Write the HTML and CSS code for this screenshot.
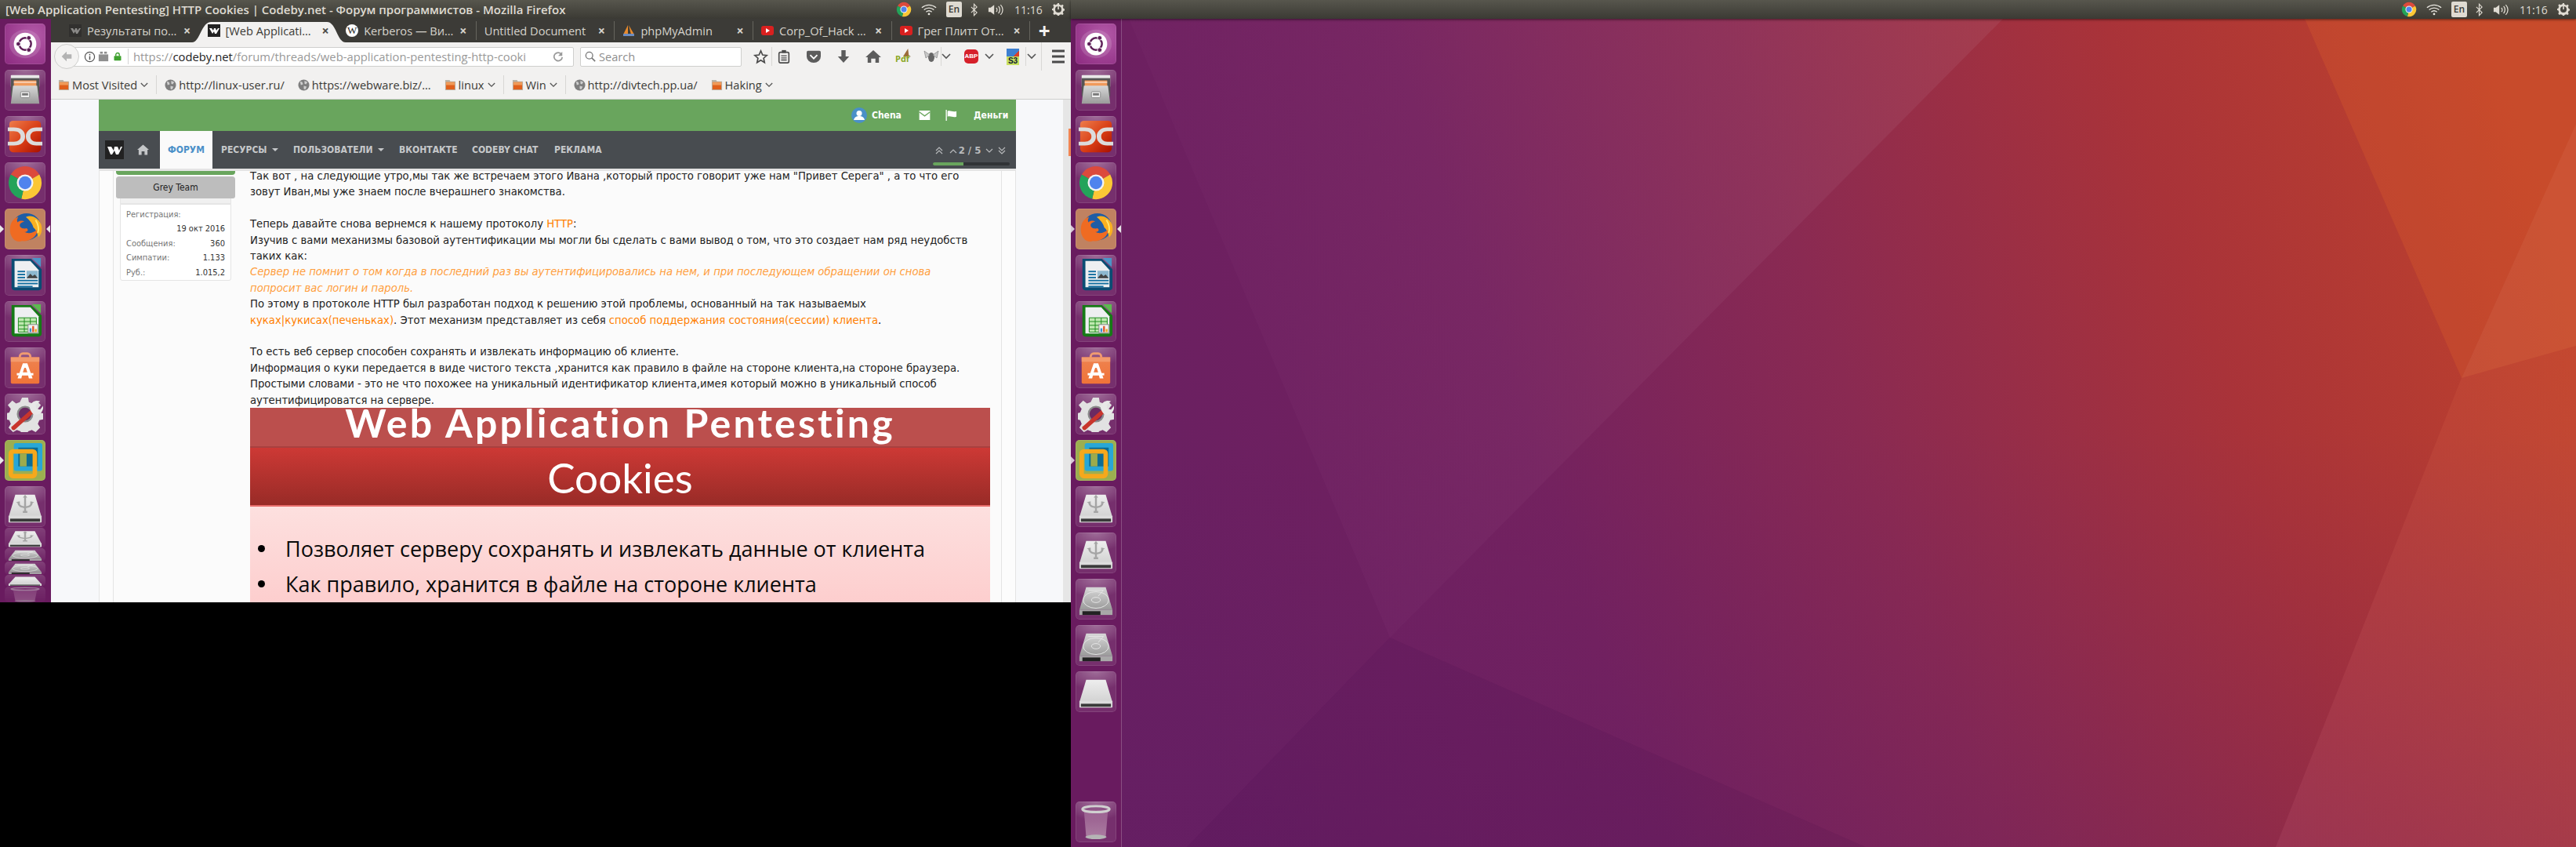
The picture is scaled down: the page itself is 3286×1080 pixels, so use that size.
FILE: index.html
```html
<!DOCTYPE html>
<html lang="ru">
<head>
<meta charset="utf-8">
<title>Ubuntu desktop</title>
<link rel="stylesheet" href="styles.css">
</head>
<body>
<svg class="defs" xmlns="http://www.w3.org/2000/svg">
<defs>
<linearGradient id="g-steel" x1="0" y1="0" x2="0" y2="1"><stop offset="0" stop-color="#d8d8d8"/><stop offset="1" stop-color="#9a9a9a"/></linearGradient>
<linearGradient id="g-dc" x1="0" y1="0" x2="1" y2="1"><stop offset="0" stop-color="#ee7d4c"/><stop offset=".55" stop-color="#d83c14"/><stop offset="1" stop-color="#a81000"/></linearGradient>
<linearGradient id="g-drive" x1="0" y1="0" x2="0" y2="1"><stop offset="0" stop-color="#eeeeee"/><stop offset="1" stop-color="#d2d2d2"/></linearGradient>
<linearGradient id="g-bin" x1="0" y1="0" x2="0" y2="1"><stop offset="0" stop-color="#a66d9b" stop-opacity=".7"/><stop offset="1" stop-color="#b890ae" stop-opacity=".8"/></linearGradient>
<linearGradient id="g-bag" x1="0" y1="0" x2="0" y2="1"><stop offset="0" stop-color="#ee8350"/><stop offset="1" stop-color="#f07338"/></linearGradient>
<symbol id="i-ubuntu" viewBox="0 0 48 48">
 <ellipse cx="24" cy="24" rx="21" ry="19" fill="#fff" opacity=".14"/>
 <circle cx="24" cy="24" r="15" fill="#fff"/>
 <circle cx="24" cy="24" r="8" fill="none" stroke="#5d1f57" stroke-width="2.600"/>
 <circle cx="15" cy="24" r="3" fill="#5d1f57" stroke="#fff"/><circle cx="29" cy="16" r="3" fill="#5d1f57" stroke="#fff"/><circle cx="29" cy="32" r="3" fill="#5d1f57" stroke="#fff"/>
</symbol>
<symbol id="i-files" viewBox="0 0 48 48">
 <rect x="5" y="4" width="38" height="16" rx="1" fill="#e8e8e8"/><rect x="5" y="8" width="38" height="24" fill="#555"/>
 <rect x="9" y="11" width="30" height="8" fill="#f09a5c"/><rect x="9" y="13" width="30" height="1" fill="#fff"/>
 <path d="M8 18h32l3 24H5z" fill="url(#g-steel)"/>
 <rect x="18" y="26" width="12" height="8" rx="1.5" fill="#eee" stroke="#8a8a8a"/><rect x="20" y="28" width="8" height="3" fill="#777"/>
</symbol>
<symbol id="i-dc" viewBox="0 0 48 48">
 <rect x="3" y="3" width="42" height="42" rx="5" fill="url(#g-dc)"/>
 <path d="M1 12h8c10 0 15 5 15 12s-5 12-15 12H1v-5h8c6 0 9-3 9-7s-3-7-9-7H1z" fill="#dcdcdc"/>
 <path d="M47 12h-8c-8 0-14 5-14 12s6 12 14 12h8v-5h-8c-5 0-8-3-8-7s3-7 8-7h8z" fill="#dcdcdc"/>
</symbol>
<symbol id="i-chrome" viewBox="0 0 48 48">
 <path d="M24 24L5 13A22 22 0 0 1 43 13z" fill="#dc4a3c"/>
 <path d="M24 24L43 13A22 22 0 0 1 19 45.500z" fill="#fbc735"/>
 <path d="M24 24L19 45.500A22 22 0 0 1 5 13z" fill="#23a35a"/>
 <circle cx="24" cy="24" r="11" fill="#f2f2f2"/><circle cx="24" cy="24" r="8.500" fill="#4f83ee"/>
</symbol>
<symbol id="i-firefox" viewBox="0 0 48 48">
 <ellipse cx="26" cy="21" rx="19" ry="18" fill="#1f5da5"/>
 <path d="M25 8c8-4 17 2 20 9 2 6 2 13-3 18-2-5-3-10-7-13-1-5-5-10-10-14z" fill="#f8b020"/>
 <path d="M4 27C3 16 9 9 15 8c-2 3-2 5-1 7 3-3 7-2 9-1-3 1-6 2-6 5 0 4 6 5 9 4 3 2 2 5-3 5 6 3 12 1 17-3 1 8-9 16-20 15C12 43 5 36 4 27z" fill="#ef6b22"/>
 <path d="M38 12c3 5 5 11 3 17" stroke="#ffe36a" stroke-width="2" fill="none"/>
</symbol>
<symbol id="i-writer" viewBox="0 0 48 48">
 <path d="M6 2h26l14 14v24a4 4 0 0 1-4 4H10a4 4 0 0 1-4-4z" fill="#0b4c73"/>
 <path d="M10 5h21l11 12v23H10z" fill="#eeeff1"/>
 <path d="M33 1h12v12z" fill="#4b95c7"/>
 <rect x="14" y="18" width="10" height="2" fill="#146fa0"/><rect x="14" y="22" width="10" height="2" fill="#146fa0"/><rect x="14" y="26" width="10" height="2" fill="#146fa0"/>
 <rect x="26" y="18" width="15" height="10" fill="#8db8cf"/><path d="M26 28l5-6 3 3 3-2 4 5z" fill="#444"/>
 <rect x="14" y="30" width="27" height="2" fill="#146fa0"/><rect x="14" y="34" width="27" height="2" fill="#146fa0"/><rect x="14" y="38" width="20" height="2" fill="#146fa0"/>
</symbol>
<symbol id="i-calc" viewBox="0 0 48 48">
 <path d="M6 2h26l14 14v24a4 4 0 0 1-4 4H10a4 4 0 0 1-4-4z" fill="#167a16"/>
 <path d="M10 5h21l11 12v23H10z" fill="#eeeff1"/>
 <path d="M33 1h12v12z" fill="#5cba4f"/>
 <path d="M15 19h24v19H15z" fill="#bfe8b0" stroke="#1a8a1a"/>
 <path d="M23 19v19M31 19v19M15 24h24M15 29h24M15 34h24" stroke="#1a8a1a"/>
 <rect x="28" y="28" width="13" height="11" fill="#f2f2f2" stroke="#888"/><rect x="30" y="33" width="2.500" height="5" fill="#3b8fd0"/><rect x="33.500" y="30" width="2.500" height="8" fill="#e05a2a"/><rect x="37" y="34" width="2.500" height="4" fill="#e8a820"/>
</symbol>
<symbol id="i-soft" viewBox="0 0 48 48">
 <path d="M17 14v-5a4 4 0 0 1 4-4h6a4 4 0 0 1 4 4v5" fill="none" stroke="#f09a70" stroke-width="3"/>
 <path d="M5 10h38v33a2 2 0 0 1-2 2H7a2 2 0 0 1-2-2z" fill="url(#g-bag)"/>
 <path d="M5 10h38v6H5z" fill="#f39a6c"/>
 <path d="M21 18h6l7 20h-5l-1-4h-8l-1 4h-5z M23 24l-2 6h6l-2-6z" fill="#fff"/>
 <rect x="13" y="31" width="22" height="3" fill="#fff"/>
</symbol>
<symbol id="i-settings" viewBox="0 0 48 48">
 <path d="M20 2h8l1 6 5 2 5-4 6 6-4 5 2 5 5 1v8l-5 1-2 5 3 5-6 6-5-3-5 2-1 5h-8l-1-5-5-2-5 3-6-6 3-5-2-5-5-1v-8l5-1 2-5-4-5 6-6 5 4 5-2z" fill="#e2e2e2"/>
 <circle cx="24" cy="24" r="11" fill="#8a8a8a"/><circle cx="24" cy="24" r="8.500" fill="#6a2a62"/>
 <path d="M6 41l26-23 4 4-26 23a3 3 0 0 1-4-4z" fill="#c8352c"/>
 <path d="M30 14c2-6 8-9 14-7l-6 5 1 5 5 1 4-5c1 6-3 12-10 12-3 0-7-4-8-11z" fill="#e8e8e8"/>
</symbol>
<symbol id="i-vmware" viewBox="0 0 48 48">
 <rect x="9" y="1" width="38" height="37" rx="3" fill="#29a7d6"/>
 <rect x="15" y="7" width="26" height="25" fill="#0c6c94"/>
 <rect x="5" y="12" width="32" height="33" rx="3" fill="none" stroke="#f5a81c" stroke-width="6"/>
 <rect x="17" y="15" width="9" height="17" fill="#9cab4d"/>
</symbol>
<symbol id="i-usb" viewBox="0 0 48 48">
 <path d="M11 8h26l9 30H2z" fill="url(#g-drive)"/>
 <rect x="2" y="36" width="44" height="9" rx="1" fill="#dcdcdc"/><rect x="4" y="40" width="40" height="4" fill="#3a3a3a"/>
 <path d="M24 11v19M15 19c1 5 5 5 9 6 4-1 8-1 9-6M21 31h6" fill="none" stroke="#a5a5a5" stroke-width="2.500"/>
 <path d="M24 8l3 4h-6zM12 18l5-1v4zM36 18l-5-1v4z" fill="#a5a5a5"/>
</symbol>
<symbol id="i-hdd" viewBox="0 0 48 48">
 <path d="M11 8h26l9 30H2z" fill="url(#g-steel)"/>
 <ellipse cx="24" cy="25" rx="17" ry="11" fill="none" stroke="#e6e6e6"/><ellipse cx="24" cy="25" rx="6" ry="3.500" fill="none" stroke="#e6e6e6"/>
 <path d="M14 12h20l-7 8" fill="none" stroke="#e6e6e6"/>
 <rect x="2" y="38" width="44" height="7" fill="#a8a8a8"/><rect x="6" y="40" width="24" height="5" fill="#222"/>
</symbol>
<symbol id="i-drive" viewBox="0 0 48 48">
 <path d="M11 8h26l9 30H2z" fill="url(#g-drive)"/>
 <rect x="2" y="36" width="44" height="9" rx="1" fill="#dcdcdc"/><rect x="4" y="40" width="40" height="4" fill="#3a3a3a"/>
</symbol>
<symbol id="i-trash" viewBox="0 0 48 48">
 <path d="M8 8h32l-3 36H11z" fill="url(#g-bin)"/>
 <ellipse cx="24" cy="44" rx="14" ry="3" fill="#b5b5b5"/>
 <ellipse cx="24" cy="7" rx="18" ry="4" fill="none" stroke="#d0d0d0" stroke-width="3"/>
</symbol>
<symbol id="i-wifi" viewBox="0 0 22 16"><path d="M1 5c6-5 14-5 20 0M4 8c4-3.500 10-3.500 14 0M7 11c2.500-2 5.500-2 8 0" fill="none" stroke="#e8e6df" stroke-width="1.500"/><circle cx="11" cy="14" r="1.500" fill="#e8e6df"/></symbol>
<symbol id="i-bt" viewBox="0 0 10 18"><path d="M1 5l8 8-4 4V1l4 4-8 8" fill="none" stroke="#dfdbd2" stroke-width="1.300"/></symbol>
<symbol id="i-snd" viewBox="0 0 22 16"><path d="M1 5h3l5-4v14l-5-4H1z" fill="#dfdbd2"/><path d="M12 5c1.500 2 1.500 4 0 6M15 3c2.500 3 2.500 7 0 10M18 1c4 4 4 10 0 14" fill="none" stroke="#dfdbd2" stroke-width="1.400"/></symbol>
<symbol id="i-power" viewBox="0 0 18 18"><path d="M8 0h2l.5 2 2.500 1 2-1 1.500 1.500-1 2 1 2.500 2 .5v2l-2 .5-1 2.500 1 2-1.500 1.500-2-1-2.500 1-.5 2H8l-.5-2-2.500-1-2 1L1.500 15l1-2-1-2.500-2-.5V8l2-.5 1-2.500-1-2L3 1.500l2 1 2.500-1z" fill="#dfdbd2"/><circle cx="9" cy="9" r="4.500" fill="#47463f"/><path d="M9 3v6" stroke="#dfdbd2" stroke-width="1.800"/></symbol>
<symbol id="i-cb" viewBox="0 0 16 16"><rect width="16" height="16" fill="#222"/><path d="M2 5h3l2 3 1-3h2l1 3 2-3h2l-4 7h-2l-1-3-2 3H6z" fill="#fff"/></symbol>
<symbol id="i-yt" viewBox="0 0 16 16"><rect y="2" width="16" height="12" rx="3" fill="#d9201f"/><path d="M6 5l5 3-5 3z" fill="#fff"/></symbol>
<symbol id="i-globe" viewBox="0 0 16 16"><circle cx="8" cy="8" r="7.500" fill="#7e7e7e"/><path d="M3 3l3 1 1 3-3 1zM9 2l4 2-2 3-2-1zM8 9l4 1-2 4-2-1z" fill="#cfcfcf"/></symbol>
<symbol id="i-folder" viewBox="0 0 16 16"><path d="M1 1h6l1 2h7v12H1z" fill="#b9b4a8"/><rect x="2" y="4" width="12" height="10" fill="#e0601c"/><rect x="2" y="4" width="12" height="4" fill="#f09a58"/></symbol>
<symbol id="i-chev" viewBox="0 0 12 8"><path d="M1 1l5 5 5-5" fill="none" stroke="#555" stroke-width="1.600"/></symbol>
</defs>
</svg>

<div class="screen-left">
 <header class="panel">
  <div class="panel-title">[Web Application Pentesting] HTTP Cookies | Codeby.net - Форум программистов - Mozilla Firefox</div>
  <div class="indicators">
   <svg class="ind-chrome"><use href="#i-chrome"/></svg>
   <svg class="ind-wifi"><use href="#i-wifi"/></svg>
   <span class="ind-en">En</span>
   <svg class="ind-bt"><use href="#i-bt"/></svg>
   <svg class="ind-snd"><use href="#i-snd"/></svg>
   <span class="ind-time">11:16</span>
   <svg class="ind-power"><use href="#i-power"/></svg>
  </div>
 </header>
 <div class="workspace">
  <nav class="launcher">
   <div class="tile tile-ubuntu"><svg viewBox="0 0 48 48"><use href="#i-ubuntu" width="48" height="48"/></svg></div>
   <div class="tile"><svg viewBox="0 0 48 48"><use href="#i-files" width="48" height="48"/></svg></div>
   <div class="tile"><svg viewBox="0 0 48 48"><use href="#i-dc" width="48" height="48"/></svg></div>
   <div class="tile"><svg viewBox="0 0 48 48"><use href="#i-chrome" width="48" height="48"/></svg></div>
   <div class="tile tile-firefox pip-both"><svg viewBox="0 0 48 48"><use href="#i-firefox" width="48" height="48"/></svg></div>
   <div class="tile"><svg viewBox="0 0 48 48"><use href="#i-writer" width="48" height="48"/></svg></div>
   <div class="tile"><svg viewBox="0 0 48 48"><use href="#i-calc" width="48" height="48"/></svg></div>
   <div class="tile"><svg viewBox="0 0 48 48"><use href="#i-soft" width="48" height="48"/></svg></div>
   <div class="tile"><svg viewBox="0 0 48 48"><use href="#i-settings" width="48" height="48"/></svg></div>
   <div class="tile tile-vmware pip-left"><svg viewBox="0 0 48 48"><use href="#i-vmware" width="48" height="48"/></svg></div>
   <div class="tile"><svg viewBox="0 0 48 48"><use href="#i-usb" width="48" height="48"/></svg></div>
   <div class="stack">
    <div class="slab slab-a"><svg viewBox="0 0 48 48" preserveAspectRatio="none"><use href="#i-usb" width="48" height="48"/></svg></div>
    <div class="slab slab-b"><svg viewBox="0 0 48 48" preserveAspectRatio="none"><use href="#i-hdd" width="48" height="48"/></svg></div>
    <div class="slab slab-b"><svg viewBox="0 0 48 48" preserveAspectRatio="none"><use href="#i-hdd" width="48" height="48"/></svg></div>
    <div class="slab slab-c"><svg viewBox="0 0 48 48" preserveAspectRatio="none"><use href="#i-drive" width="48" height="48"/></svg></div>
    <div class="slab slab-d"><svg viewBox="0 0 48 48" preserveAspectRatio="none"><use href="#i-trash" width="48" height="48"/></svg></div>
   </div>
  </nav>
  <main class="browser">
   <div class="tabs">
    <div class="tab"><svg class="fav fav-dim"><use href="#i-cb"/></svg><span class="tab-label">Результаты по…</span><span class="tab-x">×</span></div>
    <div class="tab tab-active">
     <svg class="tab-shape" viewBox="0 0 196 28"><path d="M0 28c10 0 12-26 24-26h148c12 0 13 26 24 26z" fill="#f2f1f0"/></svg>
     <svg class="fav"><use href="#i-cb"/></svg><span class="tab-label">[Web Applicati…</span><span class="tab-x">×</span></div>
    <div class="tab tab-sep"><span class="fav fav-w">W</span><span class="tab-label">Kerberos — Ви…</span><span class="tab-x">×</span></div>
    <div class="tab tab-sep"><span class="tab-label">Untitled Document</span><span class="tab-x">×</span></div>
    <div class="tab tab-sep"><svg class="fav" viewBox="0 0 16 16"><path d="M1 13L7 1v12zM8 1l3 12h4z" fill="#e98a2c"/><rect x="1" y="12" width="14" height="3" fill="#6c8cc0"/></svg><span class="tab-label">phpMyAdmin</span><span class="tab-x">×</span></div>
    <div class="tab tab-sep"><svg class="fav"><use href="#i-yt"/></svg><span class="tab-label">Corp_Of_Hack …</span><span class="tab-x">×</span></div>
    <div class="tab tab-sep"><svg class="fav"><use href="#i-yt"/></svg><span class="tab-label">Грег Плитт От…</span><span class="tab-x">×</span></div>
    <span class="tab-plus">+</span>
   </div>
   <div class="toolbar">
    <div class="back"><svg viewBox="0 0 20 20" class="back-ico"><path d="M10 3L3 10l7 7v-4h7V7h-7z" fill="#b3b3b3"/></svg></div>
    <div class="urlbar">
     <svg class="url-info" viewBox="0 0 16 16"><circle cx="8" cy="8" r="6.500" fill="none" stroke="#555" stroke-width="1.300"/><rect x="7.200" y="7" width="1.600" height="5" fill="#555"/><rect x="7.200" y="4" width="1.600" height="1.800" fill="#555"/></svg>
     <svg class="url-block" viewBox="0 0 16 16"><rect x="1" y="5" width="14" height="10" fill="#8e8e8e"/><rect x="3" y="1" width="4" height="3" fill="#8e8e8e"/><rect x="9" y="1" width="4" height="3" fill="#8e8e8e"/></svg>
     <svg class="url-lock" viewBox="0 0 16 16"><rect x="2" y="7" width="12" height="8" rx="1" fill="#3fa12e"/><path d="M5 7V5a3 3 0 0 1 6 0v2" fill="none" stroke="#3fa12e" stroke-width="1.800"/></svg>
     <span class="url-text">https://<b>codeby.net</b>/forum/threads/web-application-pentesting-http-cooki</span>
     <svg class="url-reload" viewBox="0 0 16 16"><path d="M13 5a6 6 0 1 0 1 4" fill="none" stroke="#999" stroke-width="2"/><path d="M14 1v6H8z" fill="#999"/></svg>
    </div>
    <div class="searchbar">
     <svg class="search-ico" viewBox="0 0 16 16"><circle cx="6.500" cy="6.500" r="5" fill="none" stroke="#777" stroke-width="1.500"/><path d="M10 10l5 5" stroke="#777" stroke-width="2"/></svg>
     <span class="search-text">Search</span>
    </div>
    <div class="tb-items">
     <svg class="tb tb-star" viewBox="0 0 20 20"><path d="M10 2l2.400 5.400 5.600.6-4.200 3.800 1.200 5.800-5-3-5 3 1.200-5.800L2 8l5.600-.6z" fill="none" stroke="#4a4a4a" stroke-width="1.800"/></svg>
     <span class="tb-sep"></span>
     <svg class="tb tb-30" viewBox="0 0 20 20"><rect x="3" y="4" width="14" height="15" rx="2" fill="none" stroke="#4a4a4a" stroke-width="1.800"/><rect x="7" y="1" width="6" height="4" fill="#4a4a4a"/><path d="M6 9h8M6 12h8M6 15h8" stroke="#4a4a4a" stroke-width="1.500"/></svg>
     <svg class="tb tb-46" viewBox="0 0 46 20"><path d="M15 2h16a2 2 0 0 1 2 2v6a10 9 0 0 1-20 0V4a2 2 0 0 1 2-2z" fill="#5c5c5c"/><path d="M18 8l5 5 5-5" fill="none" stroke="#fff" stroke-width="2"/></svg>
     <svg class="tb tb-30" viewBox="0 0 20 20"><path d="M7 1h6v9h5l-8 9-8-9h5z" fill="#5c5c5c"/></svg>
     <svg class="tb tb-46" viewBox="0 0 46 20"><path d="M23 1L12 11h3v8h5v-6h6v6h5v-8h3z" fill="#5c5c5c"/></svg>
     <span class="tb-pdf"><svg class="pdf-hat" viewBox="0 0 14 14"><path d="M3 12L10 1l1 9 3 2z" fill="#9c6b3a"/></svg><span class="pdf-text">Pdf</span></span>
     <svg class="tb tb-fly" viewBox="0 0 20 20"><ellipse cx="10" cy="11" rx="4" ry="6" fill="#666"/><path d="M8 8L1 3l2 9zM12 8l7-5-2 9z" fill="#c8c8c8" stroke="#777" stroke-width=".6"/></svg>
     <span class="tb-sep"></span>
     <svg class="tb-chev tb-chev-a"><use href="#i-chev"/></svg>
     <span class="tb-abp"><span class="abp-text">ABP</span></span>
     <svg class="tb-chev tb-chev-b"><use href="#i-chev"/></svg>
     <span class="tb-s3"><span class="s3-text">S3</span></span>
     <span class="tb-sep tb-sep-s3"></span>
     <svg class="tb-chev tb-chev-c"><use href="#i-chev"/></svg>
     <span class="tb-sep tb-sep-end"></span>
     <svg class="tb tb-burger" viewBox="0 0 24 20"><path d="M4 3h16M4 10h16M4 17h16" stroke="#4a4a4a" stroke-width="3"/></svg>
    </div>
   </div>
   <div class="bookmarks">
    <svg class="bm-ico"><use href="#i-folder"/></svg><span class="bm-text bm-mv">Most Visited</span><svg class="bm-chev"><use href="#i-chev"/></svg><span class="bm-sep"></span>
    <svg class="bm-ico"><use href="#i-globe"/></svg><span class="bm-text">http://linux-user.ru/</span>
    <svg class="bm-ico bm-gap"><use href="#i-globe"/></svg><span class="bm-text">https://webware.biz/…</span>
    <svg class="bm-ico bm-gap"><use href="#i-folder"/></svg><span class="bm-text">linux</span><svg class="bm-chev"><use href="#i-chev"/></svg><span class="bm-sep"></span>
    <svg class="bm-ico"><use href="#i-folder"/></svg><span class="bm-text">Win</span><svg class="bm-chev"><use href="#i-chev"/></svg><span class="bm-sep"></span>
    <svg class="bm-ico"><use href="#i-globe"/></svg><span class="bm-text">http://divtech.pp.ua/</span>
    <svg class="bm-ico bm-gap"><use href="#i-folder"/></svg><span class="bm-text">Haking</span><svg class="bm-chev"><use href="#i-chev"/></svg>
   </div>
   <div class="page">
    <div class="page-main">
     <div class="site">
      <div class="site-top">
       <span class="avatar"><svg viewBox="0 0 20 20"><circle cx="10" cy="7.500" r="3.500" fill="#fff"/><path d="M3 16c1-4 4-5 7-5s6 1 7 5z" fill="#fff"/></svg></span>
       <span class="user-name">Chena</span>
       <svg class="top-mail" viewBox="0 0 16 14"><rect width="16" height="14" fill="#fff"/><path d="M0 2l8 6 8-6" fill="none" stroke="#69a55d" stroke-width="1.500"/></svg>
       <svg class="top-flag" viewBox="0 0 16 16"><rect x="0" y="0" width="1.500" height="16" fill="#fff"/><path d="M2.500 2c4-2 7 2 13 0v8c-5 2-9-2-13 0z" fill="#fff"/></svg>
       <span class="money">Деньги</span>
      </div>
      <div class="site-nav">
       <svg class="nav-logo" viewBox="0 0 24 24"><rect width="24" height="24" fill="#222"/><path d="M3 8h5l3 5 1-5h4l2 5 2-5h2l-5 10h-3l-2-5-3 5H7z" fill="#fff"/></svg>
       <svg class="nav-home" viewBox="0 0 16 14"><path d="M8 0L0 7h2v7h4V9h4v5h4V7h2z" fill="#c4c6c8"/></svg>
       <span class="nav-active">ФОРУМ</span>
       <span class="nav-link nav-res">РЕСУРСЫ<i class="caret"></i></span>
       <span class="nav-link nav-users">ПОЛЬЗОВАТЕЛИ<i class="caret"></i></span>
       <span class="nav-link nav-vk">ВКОНТАКТЕ</span>
       <span class="nav-link nav-chat">CODEBY CHAT</span>
       <span class="nav-link nav-ad">РЕКЛАМА</span>
       <div class="pager">
        <svg class="pg pg-first" viewBox="0 0 10 10"><path d="M1 5l4-4 4 4M1 9l4-4 4 4" fill="none" stroke="#b8babc" stroke-width="1.200"/></svg>
        <svg class="pg pg-prev" viewBox="0 0 10 6"><path d="M1 5l4-4 4 4" fill="none" stroke="#b8babc" stroke-width="1.200"/></svg>
        <span class="pg-text">2 / 5</span>
        <svg class="pg pg-next" viewBox="0 0 10 6"><path d="M1 1l4 4 4-4" fill="none" stroke="#b8babc" stroke-width="1.200"/></svg>
        <svg class="pg pg-last" viewBox="0 0 10 10"><path d="M1 1l4 4 4-4M1 5l4 4 4-4" fill="none" stroke="#b8babc" stroke-width="1.200"/></svg>
        <span class="pg-bar"><span class="pg-fill"></span></span>
       </div>
      </div>
      <div class="thread">
       <div class="post">
        <aside class="sidebar">
         <div class="side-green"></div>
         <div class="side-grey">Grey Team</div>
         <div class="side-strip"></div>
         <dl class="stats">
          <dt class="stat-wide">Регистрация:</dt><dd class="stat-wide">19 окт 2016</dd>
          <dt>Сообщения:</dt><dd>360</dd>
          <dt>Симпатии:</dt><dd>1.133</dd>
          <dt>Руб.:</dt><dd>1.015,2</dd>
         </dl>
        </aside>
        <article class="content">
         <p class="post-text">Так вот , на следующие утро,мы так же встречаем этого Ивана ,который просто говорит уже нам "Привет Серега" , а то что его<br>зовут Иван,мы уже знаем после вчерашнего знакомства.<br><br>Теперь давайте снова вернемся к нашему протоколу <span class="hl">HTTP</span>:<br>Изучив с вами механизмы базовой аутентификации мы могли бы сделать с вами вывод о том, что это создает нам ряд неудобств<br>таких как:<br><em class="hl-soft">Сервер не помнит о том когда в последний раз вы аутентифицировались на нем, и при последующем обращении он снова<br>попросит вас логин и пароль.</em><br>По этому в протоколе HTTP был разработан подход к решению этой проблемы, основанный на так называемых<br><span class="hl">куках|кукисах(печеньках)</span>. Этот механизм представляет из себя <span class="hl">способ поддержания состояния(сессии) клиента</span>.<br><br>То есть веб сервер способен сохранять и извлекать информацию об клиенте.<br>Информация о куки передается в виде чистого текста ,хранится как правило в файле на стороне клиента,на стороне браузера.<br>Простыми словами - это не что похожее на уникальный идентификатор клиента,имея который можно в уникальный способ<br>аутентифицироватся на сервере.</p>
         <div class="slide">
          <div class="slide-head">Web Application Pentesting</div>
          <div class="slide-sub">Cookies</div>
          <div class="slide-body">
           <div class="slide-item">Позволяет серверу сохранять и извлекать данные от клиента</div>
           <div class="slide-item">Как правило, хранится в файле на стороне клиента</div>
          </div>
         </div>
        </article>
       </div>
      </div>
     </div>
    </div>
    <div class="scrollbar"><div class="thumb"></div></div>
   </div>
  </main>
 </div>
</div>

<div class="screen-right">
 <header class="panel panel-end">
  <div class="indicators">
   <svg class="ind-chrome"><use href="#i-chrome"/></svg>
   <svg class="ind-wifi"><use href="#i-wifi"/></svg>
   <span class="ind-en">En</span>
   <svg class="ind-bt"><use href="#i-bt"/></svg>
   <svg class="ind-snd"><use href="#i-snd"/></svg>
   <span class="ind-time">11:16</span>
   <svg class="ind-power"><use href="#i-power"/></svg>
  </div>
 </header>
 <div class="workspace workspace-full">
  <nav class="launcher launcher-edge">
   <div class="tile tile-ubuntu"><svg viewBox="0 0 48 48"><use href="#i-ubuntu" width="48" height="48"/></svg></div>
   <div class="tile"><svg viewBox="0 0 48 48"><use href="#i-files" width="48" height="48"/></svg></div>
   <div class="tile"><svg viewBox="0 0 48 48"><use href="#i-dc" width="48" height="48"/></svg></div>
   <div class="tile"><svg viewBox="0 0 48 48"><use href="#i-chrome" width="48" height="48"/></svg></div>
   <div class="tile tile-firefox pip-hollow pip-right"><svg viewBox="0 0 48 48"><use href="#i-firefox" width="48" height="48"/></svg></div>
   <div class="tile"><svg viewBox="0 0 48 48"><use href="#i-writer" width="48" height="48"/></svg></div>
   <div class="tile"><svg viewBox="0 0 48 48"><use href="#i-calc" width="48" height="48"/></svg></div>
   <div class="tile"><svg viewBox="0 0 48 48"><use href="#i-soft" width="48" height="48"/></svg></div>
   <div class="tile"><svg viewBox="0 0 48 48"><use href="#i-settings" width="48" height="48"/></svg></div>
   <div class="tile tile-vmware pip-hollow"><svg viewBox="0 0 48 48"><use href="#i-vmware" width="48" height="48"/></svg></div>
   <div class="tile"><svg viewBox="0 0 48 48"><use href="#i-usb" width="48" height="48"/></svg></div>
   <div class="tile"><svg viewBox="0 0 48 48"><use href="#i-usb" width="48" height="48"/></svg></div>
   <div class="tile"><svg viewBox="0 0 48 48"><use href="#i-hdd" width="48" height="48"/></svg></div>
   <div class="tile"><svg viewBox="0 0 48 48"><use href="#i-hdd" width="48" height="48"/></svg></div>
   <div class="tile"><svg viewBox="0 0 48 48"><use href="#i-drive" width="48" height="48"/></svg></div>
   <div class="tile tile-trash"><svg viewBox="0 0 48 48"><use href="#i-trash" width="48" height="48"/></svg></div>
  </nav>
  <div class="wallpaper">
   <svg class="wall-art" viewBox="1431 24 1855 1056" preserveAspectRatio="none">
    <defs>
     <linearGradient id="w-base" gradientUnits="userSpaceOnUse" x1="1500" y1="850" x2="3250" y2="250">
      <stop offset="0" stop-color="#6a2063"/><stop offset=".28" stop-color="#74225f"/><stop offset=".5" stop-color="#8a2a52"/><stop offset=".75" stop-color="#a93339"/><stop offset="1" stop-color="#c0432b"/>
     </linearGradient>
     <linearGradient id="w-wedge" gradientUnits="userSpaceOnUse" x1="1550" y1="300" x2="2500" y2="100">
      <stop offset="0" stop-color="#c080b0" stop-opacity=".02"/><stop offset="1" stop-color="#c08aa0" stop-opacity=".13"/>
     </linearGradient>
     <linearGradient id="w-low" gradientUnits="userSpaceOnUse" x1="2400" y1="550" x2="2400" y2="1080">
      <stop offset="0" stop-color="#5c1a66" stop-opacity="0"/><stop offset="1" stop-color="#5c1a66" stop-opacity=".25"/>
     </linearGradient>
     <linearGradient id="w-br" gradientUnits="userSpaceOnUse" x1="3100" y1="480" x2="3100" y2="1080">
      <stop offset="0" stop-color="#e06a48" stop-opacity=".16"/><stop offset="1" stop-color="#d8708a" stop-opacity=".14"/>
     </linearGradient>
    </defs>
    <rect x="1431" y="24" width="1855" height="1056" fill="url(#w-base)"/>
    <rect x="1431" y="24" width="1855" height="1056" fill="url(#w-low)"/>
    <polygon points="1440,24 2555,24 1773,813" fill="url(#w-wedge)"/>
    <polygon points="1431,24 1440,24 1773,813 1514,1080 1431,1080" fill="#5a1560" fill-opacity=".03"/>
    <polygon points="1773,813 2380,1080 1514,1080" fill="#3a0e48" fill-opacity=".1"/>
    <polygon points="2940,24 3286,24 3286,158 3140,482" fill="#e0622a" fill-opacity=".28"/>
    <polygon points="3286,158 3140,482 3286,441" fill="#e87a48" fill-opacity=".3"/>
    <polygon points="3140,482 3286,441 3286,1080 2903,1080" fill="url(#w-br)"/>
   </svg>
  </div>
 </div>
</div>
</body>
</html>
```
FILE: styles.css
```css
* { box-sizing: border-box; }
html, body { margin: 0; padding: 0; }
body { width: 3286px; height: 1080px; background: #000; display: flex; align-items: flex-start; overflow: hidden; font-family: "Open Sans", "Noto Sans", sans-serif; }
.defs { position: absolute; width: 0; height: 0; }
svg { display: block; flex: none; }

.screen-left { width: 1366px; height: 768px; display: flex; flex-direction: column; overflow: hidden; }
.screen-right { width: 1920px; height: 1080px; display: flex; flex-direction: column; }

/* top panel */
.panel { height: 24px; flex: none; display: flex; align-items: center; background: linear-gradient(#57564d, #3b3a34); position: relative; z-index: 5; }
.panel-end { justify-content: flex-end; box-shadow: 0 1px 3px rgba(0,0,0,.55); }
.panel-title { flex: 1; padding-left: 7px; color: #dfdbd2; font: 600 15px "Open Sans", sans-serif; white-space: nowrap; }
.indicators { display: flex; align-items: center; height: 24px; }
.ind-chrome { width: 20px; height: 20px; }
.ind-wifi { width: 20px; height: 15px; margin-left: 12px; }
.ind-en { width: 20px; height: 20px; margin-left: 12px; background: #dfdbd2; border-radius: 2px; color: #3c3b37; font: 600 12px/20px "Open Sans", sans-serif; text-align: center; }
.ind-bt { width: 9px; height: 17px; margin-left: 11px; }
.ind-snd { width: 20px; height: 15px; margin-left: 13px; }
.ind-time { width: 35px; margin-left: 14px; color: #dfdbd2; font: 400 14px "Open Sans", sans-serif; white-space: nowrap; }
.ind-power { width: 16px; height: 16px; margin-left: 13px; margin-right: 8px; }

.workspace { flex: 1; display: flex; min-height: 0; }
.workspace-full { height: 1056px; }

/* launcher */
.launcher { width: 65px; flex: none; background: #691b5f; padding: 6px 0 0 6px; display: flex; flex-direction: column; gap: 7px; overflow: hidden; }
.launcher-edge { border-right: 1px solid #8a4f82; width: 65px; }
.tile { width: 52px; height: 52px; flex: none; border-radius: 5px; position: relative; display: flex; align-items: center; justify-content: center; background: radial-gradient(ellipse 42px 24px at 50% 0, rgba(255,255,255,.3), rgba(255,255,255,0)), rgba(255,255,255,.09); box-shadow: inset 0 0 0 1px rgba(255,255,255,.1); }
.tile svg { width: 46px; height: 46px; }
.tile-ubuntu { background: radial-gradient(circle at 70% 30%, #b45aa8, #8c2a80); }
.tile-firefox { background: #c08261; }
.tile-vmware { background: #9cae50; }
.tile-trash { margin-top: 107px; }
.pip-both::before, .pip-left::before, .pip-hollow::before { content: ""; position: absolute; left: -6px; top: 21px; border: 5px solid transparent; border-left-color: #e8e8e8; }
.pip-both::after, .pip-right::after { content: ""; position: absolute; right: -6px; top: 21px; border: 5px solid transparent; border-right-color: #e8e8e8; }
.pip-hollow::before { border-left-color: #d8c8d8; }
.stack { display: flex; flex-direction: column; margin-top: -6px; width: 52px; }
.slab { width: 52px; display: flex; justify-content: center; background: linear-gradient(rgba(255,255,255,.16), rgba(255,255,255,.03)); border-radius: 5px; }
.slab svg { width: 46px; height: 100%; }
.slab-a { height: 26px; }
.slab-b { height: 17px; }
.slab-c { height: 15px; }
.slab-d { height: 20px; opacity: .55; }

/* browser */
.browser { flex: 1; min-width: 0; display: flex; flex-direction: column; background: #f2f1f0; }
.tabs { height: 30px; flex: none; background: #3c3b37; display: flex; align-items: center; padding-left: 13px; color: #d6d3cc; font: 400 14.6px "Open Sans", sans-serif; }
.tab { width: 176.6px; height: 30px; padding: 0 10px; display: flex; align-items: center; position: relative; white-space: nowrap; }
.tab-sep { border-right: 1px solid #66655e; height: 24px; }
.tab-active { color: #3c3b37; }
.tab-shape { position: absolute; left: -10px; bottom: 0; width: 196px; height: 28px; }
.fav { width: 16px; height: 16px; margin-right: 7px; position: relative; }
.fav-dim { opacity: .4; }
.fav-w { background: #fff; border-radius: 50%; color: #222; font: 400 13px/16px "Liberation Serif", serif; text-align: center; }
.tab-label { flex: 1; overflow: hidden; position: relative; }
.tab-x { width: 10px; color: #d6d3cc; font-size: 16px; font-weight: 700; line-height: 16px; position: relative; margin-right: 1px; text-align: center; }
.tab-active .tab-x { color: #4c4b47; }
.tab-plus { width: 32px; color: #f2f1f0; font-size: 26px; font-weight: 700; line-height: 24px; text-align: center; margin-left: 2px; }

.toolbar { height: 36px; flex: none; display: flex; align-items: center; padding-left: 4px; background: #f2f1f0; position: relative; }
.back { width: 32px; height: 32px; border-radius: 50%; background: #f4f3f2; border: 1px solid #cfcfcd; display: flex; align-items: center; justify-content: center; position: relative; z-index: 1; }
.back-ico { width: 18px; height: 18px; }
.urlbar { width: 647px; height: 25px; margin-left: -16px; background: #fff; border: 1px solid #cfcfcd; border-radius: 0 2px 2px 0; display: flex; align-items: center; padding-left: 21px; }
.url-info { width: 15px; height: 15px; }
.url-block { width: 14px; height: 14px; margin-left: 3px; }
.url-lock { width: 12px; height: 14px; margin-left: 5px; margin-right: 7px; }
.url-text { width: 528px; padding-left: 6px; margin-right: 14px; border-left: 1px solid #d5d5d5; color: #999; font: 400 14.8px "Open Sans", sans-serif; white-space: nowrap; overflow: hidden; }
.url-text b { color: #222; font-weight: 400; }
.url-reload { width: 14px; height: 14px; }
.searchbar { width: 206px; height: 25px; margin-left: 8px; background: #fff; border: 1px solid #cfcfcd; border-radius: 2px; display: flex; align-items: center; padding-left: 5px; }
.search-ico { width: 14px; height: 14px; }
.search-text { margin-left: 4px; color: #8e8e8e; font: 400 14.6px "Open Sans", sans-serif; }
.tb-items { display: flex; align-items: center; margin-left: 11px; height: 36px; }
.tb { height: 20px; }
.tb-star { width: 27px; height: 19px; }
.tb-sep { width: 1px; height: 24px; background: #d8d7d5; }
.tb-30 { width: 30px; height: 18px; }
.tb-46 { width: 46px; height: 18px; }
.tb-pdf { width: 30px; height: 24px; position: relative; display: block; }
.pdf-hat { position: absolute; left: 12px; top: 1px; width: 13px; height: 13px; }
.pdf-text { position: absolute; left: 5px; top: 9px; color: #8aa824; font: 700 11px/12px "Open Sans", sans-serif; }
.tb-fly { width: 24px; margin-left: 9px; }
.tb-chev { width: 12px; height: 8px; }
.tb-abp { width: 18px; height: 18px; margin-left: 17px; background: #d6202a; border-radius: 5px; display: flex; align-items: center; justify-content: center; overflow: hidden; }
.abp-text { color: #fff; font: 700 8px/1 "Liberation Sans", sans-serif; }
.tb-chev-b { margin-left: 8px; }
.tb-s3 { width: 16px; height: 21px; margin-left: 16px; background: linear-gradient(135deg, #3d7fd0 50%, #d8402c 50%); display: flex; align-items: flex-end; justify-content: center; }
.s3-text { color: #123; background: #c8e060; font: 700 10px/11px "Liberation Sans", sans-serif; width: 16px; text-align: center; }
.tb-sep-s3 { margin-left: 8px; }
.tb-chev-c { margin-left: 1px; }
.tb-sep-end { margin-left: 6px; height: 36px; }
.tb-burger { width: 24px; height: 20px; margin-left: 9px; }

.bookmarks { height: 37px; flex: none; display: flex; align-items: center; padding-left: 9px; border-bottom: 1px solid #cfcfcd; color: #3c3b37; font: 400 14.6px "Open Sans", sans-serif; white-space: nowrap; background: #f2f1f0; }
.bm-ico { width: 15px; height: 15px; margin-right: 3px; }
.bm-gap { margin-left: 17px; }
.bm-chev { width: 10px; height: 7px; margin-left: 4px; }
.bm-sep { width: 1px; height: 24px; background: #d8d7d5; margin: 0 10px; }

/* page */
.page { flex: 1; min-height: 0; display: flex; }
.page-main { flex: 1; min-width: 0; background: #f7f8fa; padding-left: 61px; overflow: hidden; font-family: "DejaVu Sans Condensed", "DejaVu Sans", sans-serif; font-stretch: condensed; }
.site { width: 1170px; height: 100%; display: flex; flex-direction: column; }
.site-top { height: 40px; flex: none; background: #69a55d; display: flex; align-items: center; color: #fff; font-size: 12px; font-weight: 700; padding-left: 960px; }
.avatar { width: 20px; height: 20px; border-radius: 50%; background: #4a90c8; }
.user-name { width: 40px; margin-left: 6px; }
.top-mail { width: 15px; height: 12px; margin-left: 20px; }
.top-flag { width: 15px; height: 14px; margin-left: 19px; }
.money { margin-left: 21px; }
.site-nav { height: 48px; flex: none; background: #484c50; display: flex; align-items: center; color: #c6c8ca; font-size: 12px; font-weight: 700; position: relative; z-index: 2; box-shadow: 0 3px 0 #e4e4e4; padding-left: 8px; white-space: nowrap; }
.nav-logo { width: 24px; height: 24px; }
.nav-home { width: 15px; height: 14px; margin-left: 17px; }
.nav-active { width: 67px; height: 48px; margin-left: 14px; background: #fafafa; color: #4a90c8; line-height: 48px; text-align: center; }
.nav-res { margin-left: 11px; width: 92px; }
.nav-users { width: 135px; }
.nav-vk { width: 93px; }
.nav-chat { width: 105px; }
.nav-ad { width: 60px; }
.caret { display: inline-block; margin-left: 6px; vertical-align: 2px; border: 4px solid transparent; border-top-color: #c6c8ca; border-bottom: 0; }
.pager { position: absolute; right: 8px; top: 0; width: 98px; height: 48px; }
.pg { position: absolute; width: 10px; }
.pg-first { left: 3px; top: 20px; height: 10px; }
.pg-prev { left: 21px; top: 23px; height: 6px; }
.pg-text { position: absolute; left: 27px; top: 17px; width: 40px; text-align: center; color: #b8babc; font-size: 13px; }
.pg-next { left: 67px; top: 22px; height: 6px; }
.pg-last { left: 83px; top: 20px; height: 10px; }
.pg-bar { position: absolute; left: 0; top: 40px; width: 98px; height: 4px; border-radius: 2px; background: #303336; overflow: hidden; }
.pg-fill { display: block; width: 39px; height: 4px; background: #69a55d; }

.thread { flex: 1; min-height: 0; padding: 0 17px; background: #fcfcfc; border-left: 1px solid #e4e4e4; border-right: 1px solid #e4e4e4; overflow: hidden; }
.post { height: 100%; display: flex; background: #fbfbfb; border-left: 1px solid #e4e4e4; border-right: 1px solid #e4e4e4; }
.sidebar { width: 174px; flex: none; padding-left: 3px; }
.side-green { width: 152px; height: 8px; background: #69a55d; border-radius: 0 0 4px 4px; }
.side-grey { width: 152px; height: 28px; margin-top: 2px; background: #bdbdbd; border-radius: 4px 4px 3px 3px; color: #222; font-size: 12px; line-height: 28px; text-align: center; }
.side-strip { width: 142px; height: 7px; margin-left: 5px; background: #f0f0f0; border: 1px solid #e6e6e6; border-top: 0; }
.stats { width: 142px; height: 98px; margin: 0 0 0 5px; padding: 3px 7px 0; background: #fff; border: 1px solid #e4e4e4; border-radius: 0 0 3px 3px; display: grid; grid-template-columns: 1fr auto; grid-auto-rows: 18.500px; align-items: center; font-size: 11px; }
.stats dt { color: #777; }
.stats dd { margin: 0; color: #333; text-align: right; }
.stat-wide { grid-column: 1 / -1; }

.content { flex: 1; min-width: 0; }
.post-text { margin: -1px 0 0; font-size: 14.7px; line-height: 20.400px; color: #222; white-space: nowrap; }
.hl { color: #ff8000; }
.hl-soft { color: #ff9e3d; }

.slide { width: 944px; height: 260px; font-family: Lato, "Open Sans", sans-serif; font-stretch: normal; overflow: hidden; }
.slide-head { height: 51px; background: #bb4f4d; border-bottom: 2px solid #a9403f; color: #fff; font-size: 50px; font-weight: 700; line-height: 38px; letter-spacing: 3.200px; text-align: center; overflow: hidden; white-space: nowrap; }
.slide-sub { height: 75px; background: linear-gradient(#cd3935, #982b27); border-bottom: 2px solid #e76c6a; color: #fff; font-size: 53px; font-weight: 400; line-height: 76px; text-align: center; }
.slide-body { height: 134px; background: linear-gradient(#fde0df, #fdcccc); padding: 31px 0 0 45px; color: #0a0a0a; font-family: "Open Sans", "Noto Sans", sans-serif; font-size: 27px; line-height: 45px; white-space: nowrap; }
.slide-item { position: relative; }
.slide-item::before { content: ""; position: absolute; left: -35px; top: 18px; width: 9px; height: 9px; border-radius: 50%; background: #000; }

.scrollbar { width: 10px; flex: none; background: #e6e6e6; padding: 37px 0 0 7px; }
.thumb { width: 3px; height: 35px; background: #f08453; }

/* wallpaper */
.wallpaper { flex: 1; min-width: 0; position: relative; background: #6a2063; }
.wall-art { position: absolute; left: 0; top: 0; width: 100%; height: 100%; }
```
